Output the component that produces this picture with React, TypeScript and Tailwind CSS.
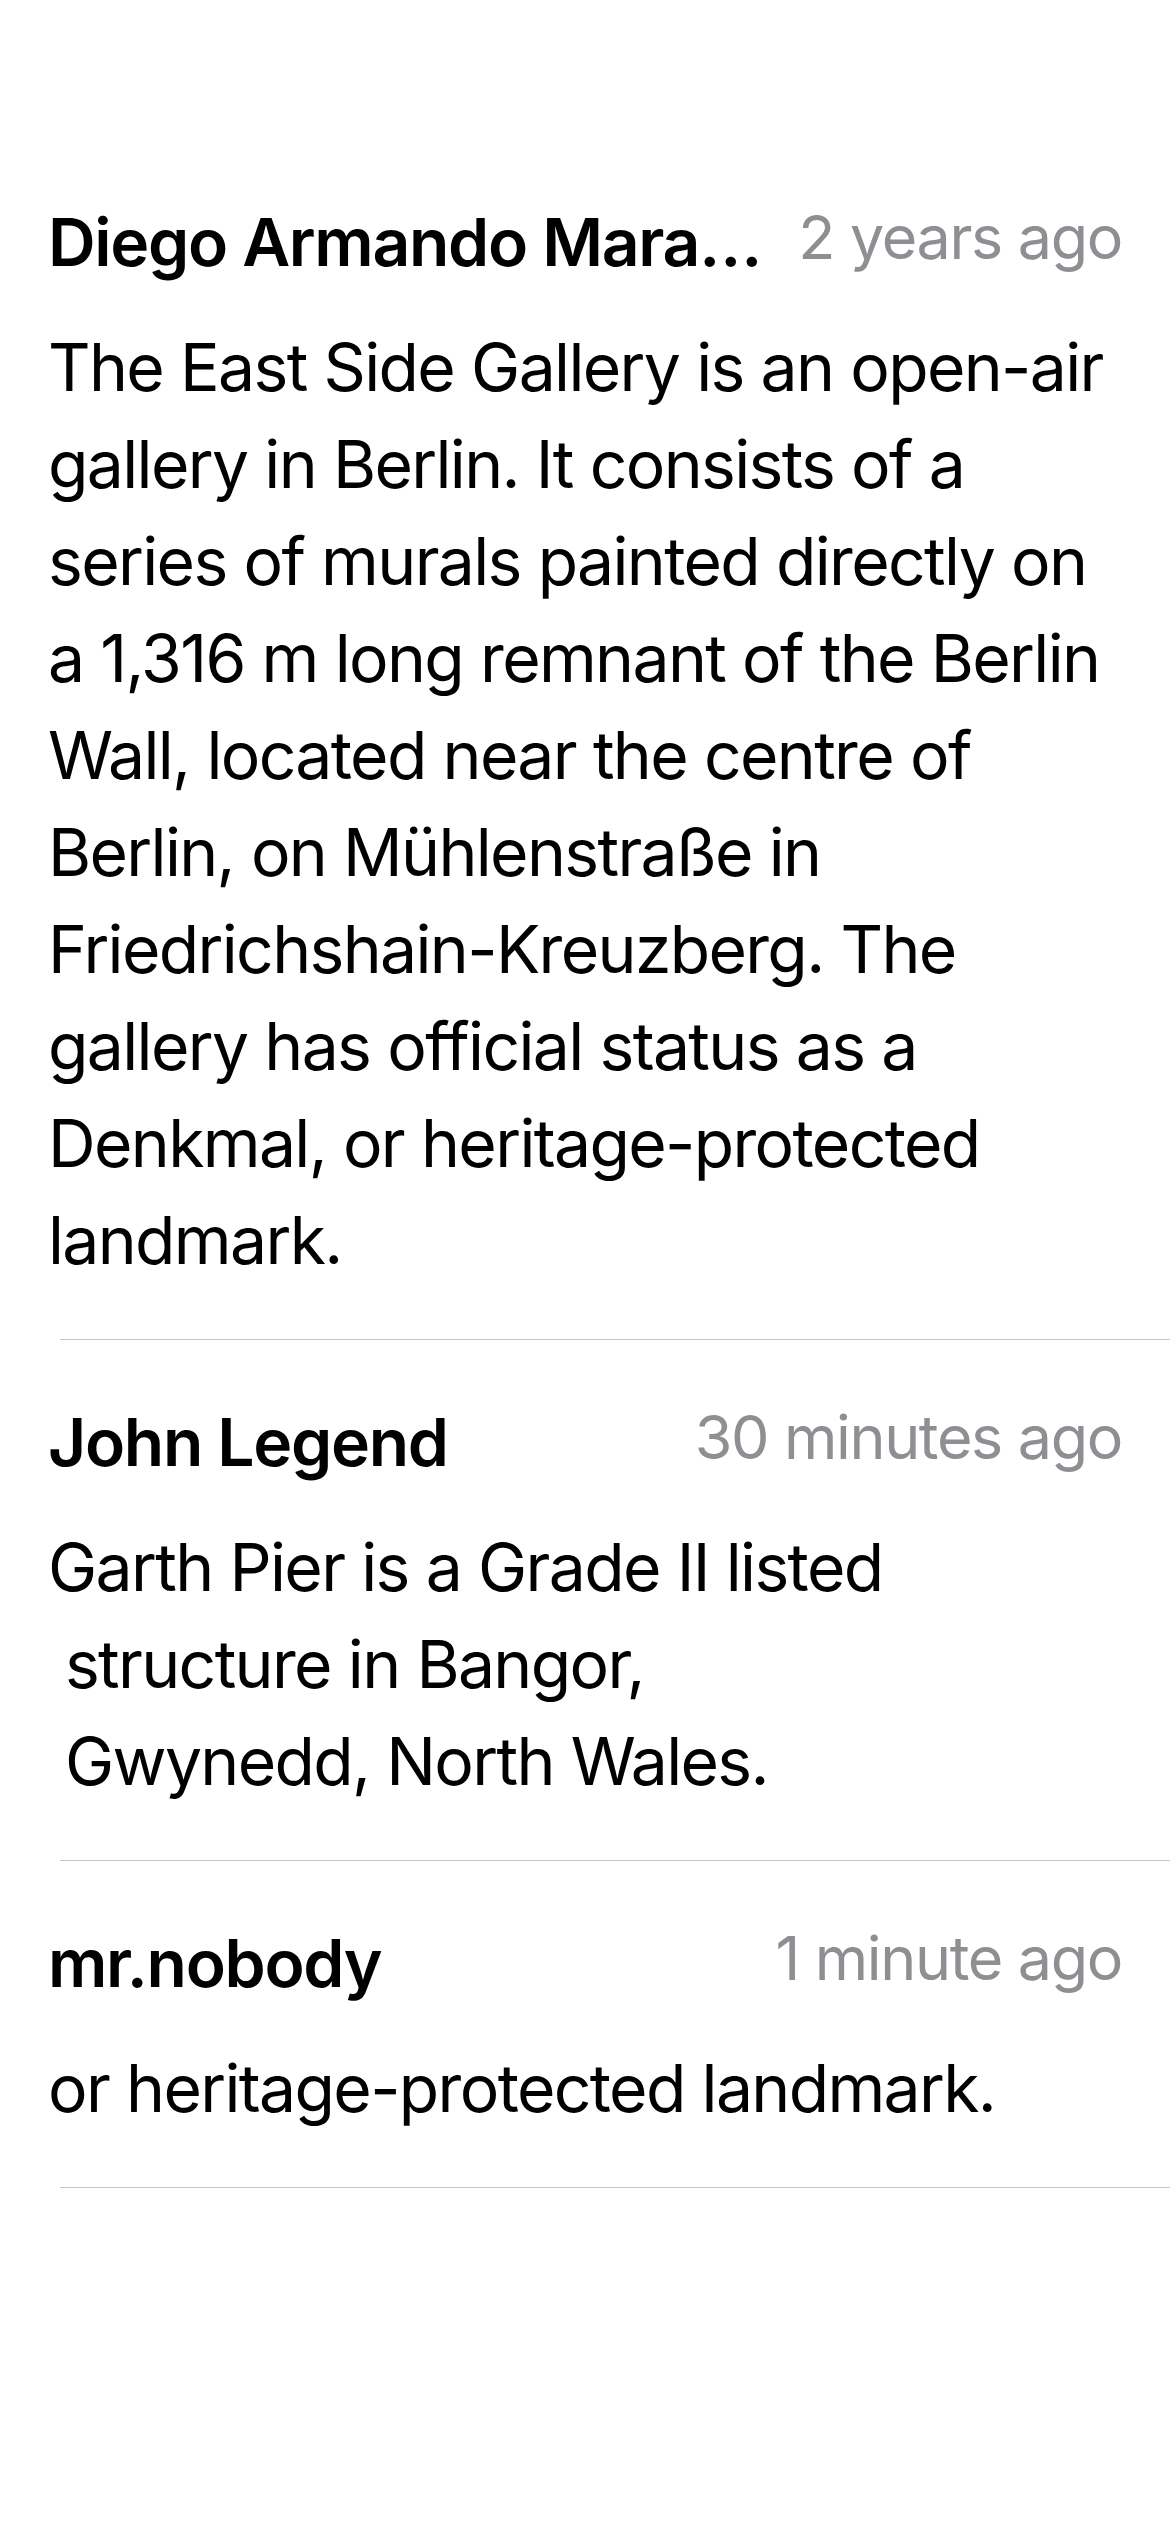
import type { ReactNode } from 'react';

interface Comment {
  id: number;
  author: string;
  time: string;
  body: string;
}

const comments: Comment[] = [
  {
    id: 1,
    author: 'Diego Armando Maradona',
    time: '2 years ago',
    body:
      'The East Side Gallery is an open-air gallery in Berlin. It consists of a series of murals painted directly on a 1,316 m long remnant of the Berlin Wall, located near the centre of Berlin, on Mühlenstraße in Friedrichshain-Kreuzberg. The gallery has official status as a Denkmal, or heritage-protected landmark.',
  },
  {
    id: 2,
    author: 'John Legend',
    time: '30 minutes ago',
    body: 'Garth Pier is a Grade II listed\n structure in Bangor,\n Gwynedd, North Wales.',
  },
  {
    id: 3,
    author: 'mr.nobody',
    time: '1 minute ago',
    body: 'or heritage-protected landmark.',
  },
];

const CommentCell = ({ comment }: { comment: Comment }) => (
  <div>
    <div className="pl-[48px] pt-[63px] pb-[50px]">
      <div className="flex items-start pr-[48px]">
        <span className="min-w-0 flex-1 truncate text-[66px] font-semibold leading-[79px] tracking-[-0.02em] text-black">
          {comment.author}
        </span>
        <span className="ml-[24px] shrink-0 text-[61px] leading-[69px] tracking-[-0.022em] text-[#8e8e93]">
          {comment.time}
        </span>
      </div>
      <p className="mt-[37px] whitespace-pre-wrap pr-[54px] text-[66px] leading-[97px] tracking-[-0.025em] text-black">
        {comment.body}
      </p>
    </div>
    <div className="ml-[60px] h-px bg-[#c6c6c8]" />
  </div>
);

const Screen = ({ children }: { children: ReactNode }) => (
  <div className="min-h-screen w-full bg-white pt-[140px] font-['Inter',sans-serif] antialiased">{children}</div>
);

export default function App() {
  return (
    <Screen>
      {comments.map((comment) => (
        <CommentCell comment={comment} key={comment.id} />
      ))}
    </Screen>
  );
}
